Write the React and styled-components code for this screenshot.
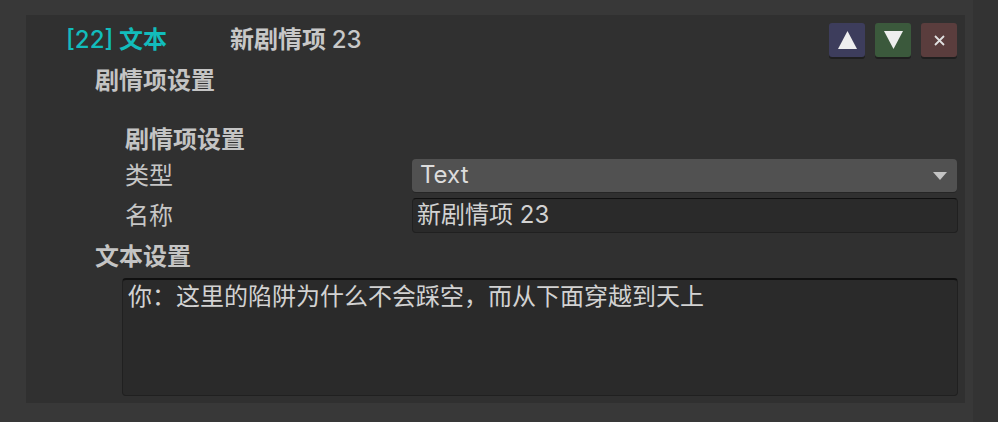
import React from 'react';
import styled, { createGlobalStyle } from 'styled-components';

const GlobalStyle = createGlobalStyle`
  html, body {
    margin: 0;
    padding: 0;
    background: #383838;
  }
  body {
    font-family: Inter, "Noto Sans CJK SC", sans-serif;
    line-height: 1.2;
  }
`;

const Page = styled.div`
  display: flex;
  width: 998px;
  height: 422px;
  background: #383838;
  overflow: hidden;
`;

const Content = styled.div`
  width: 973px;
  box-sizing: border-box;
  padding: 15px 8px 0 26px;
`;

const Scrollbar = styled.div`
  flex: 1;
  background: #333333;
`;

const Panel = styled.div`
  display: flex;
  flex-direction: column;
  height: 388px;
  box-sizing: border-box;
  padding: 8px 8px 7px 0;
  background: #303030;
  color: #c4c4c4;
  font-size: 24px;
`;

const Header = styled.div`
  display: flex;
  align-items: center;
  height: 34px;
  line-height: 28px;
  padding-left: 40px;
`;

const Tag = styled.span`
  width: 164px;
  color: #12bcbc;
  font-weight: 700;
`;

const ItemName = styled.span`
  flex: 1;
  color: #c8c8c8;
  font-weight: 700;
`;

// latin glyphs in the bold header lines render at a lighter weight
const Latin = styled.span`
  font-weight: 500;
`;

const Actions = styled.div`
  display: flex;
  gap: 10px;
`;

const ActionButton = styled.button`
  display: flex;
  align-items: center;
  justify-content: center;
  width: 36px;
  height: 34px;
  padding: 0;
  border: none;
  border-radius: 3px;
  background: ${p => p.$bg};
  box-shadow: 0 2px 0 #1f1f1f;
  color: #eeeeee;
`;

const Heading = styled.div`
  height: 30px;
  line-height: 30px;
  margin-top: ${p => p.$top}px;
  margin-left: ${p => p.$indent}px;
  font-weight: 700;
  color: #c4c4c4;
`;

const Row = styled.div`
  display: flex;
  align-items: center;
  margin-top: ${p => p.$top}px;
  padding-left: 99px;
`;

const Label = styled.span`
  width: 287px;
  line-height: 28px;
  color: #c6c6c6;
`;

const Dropdown = styled.div`
  flex: 1;
  display: flex;
  align-items: center;
  justify-content: space-between;
  height: 33px;
  box-sizing: border-box;
  padding: 0 10px 0 8px;
  border-radius: 4px;
  background: #515151;
  box-shadow: 0 1px 0 #262626;
  color: #dcdcdc;
`;

const TextField = styled.div`
  flex: 1;
  display: flex;
  align-items: center;
  height: 35px;
  box-sizing: border-box;
  padding-left: 4px;
  margin-right: -1px;
  border: 1px solid #202020;
  border-top-color: #101010;
  border-radius: 4px;
  background: #2a2a2a;
  color: #d2d2d2;
`;

const TextArea = styled.div`
  height: 119px;
  margin: 6px -1px 0 96px;
  box-sizing: border-box;
  padding: 3px 5px;
  line-height: 28px;
  border: 1px solid #202020;
  border-top: 2px solid #101010;
  border-radius: 4px;
  background: #2a2a2a;
  color: #d2d2d2;
`;

const Triangle = ({ down }) => (
  <svg width="19" height="18" viewBox="0 0 19 18">
    {down
      ? <polygon points="0,0 19,0 9.5,18" fill="currentColor" />
      : <polygon points="9.5,0 19,18 0,18" fill="currentColor" />}
  </svg>
);

export default function App() {
  return (
    <>
      <GlobalStyle />
      <Page>
        <Content>
          <Panel>
            <Header>
              <Tag><Latin>[22]</Latin> 文本</Tag>
              <ItemName>新剧情项 <Latin>23</Latin></ItemName>
              <Actions>
                <ActionButton $bg="#3d3d5c"><Triangle /></ActionButton>
                <ActionButton $bg="#3b593c"><Triangle down /></ActionButton>
                <ActionButton $bg="#5a3d3d">
                  <svg width="11" height="11" viewBox="0 0 11 11">
                    <path d="M1 1 L10 10 M10 1 L1 10" stroke="#e0e0e0" strokeWidth="1.8" />
                  </svg>
                </ActionButton>
              </Actions>
            </Header>
            <Heading $top={9} $indent={69}>剧情项设置</Heading>
            <Heading $top={29} $indent={99}>剧情项设置</Heading>
            <Row $top={4}>
              <Label>类型</Label>
              <Dropdown>
                Text
                <svg width="14" height="8" viewBox="0 0 14 8">
                  <polygon points="0,0 14,0 7,8" fill="#c4c4c4" />
                </svg>
              </Dropdown>
            </Row>
            <Row $top={6}>
              <Label>名称</Label>
              <TextField>新剧情项 23</TextField>
            </Row>
            <Heading $top={9} $indent={69}>文本设置</Heading>
            <TextArea>你：这里的陷阱为什么不会踩空，而从下面穿越到天上</TextArea>
          </Panel>
        </Content>
        <Scrollbar />
      </Page>
    </>
  );
}
